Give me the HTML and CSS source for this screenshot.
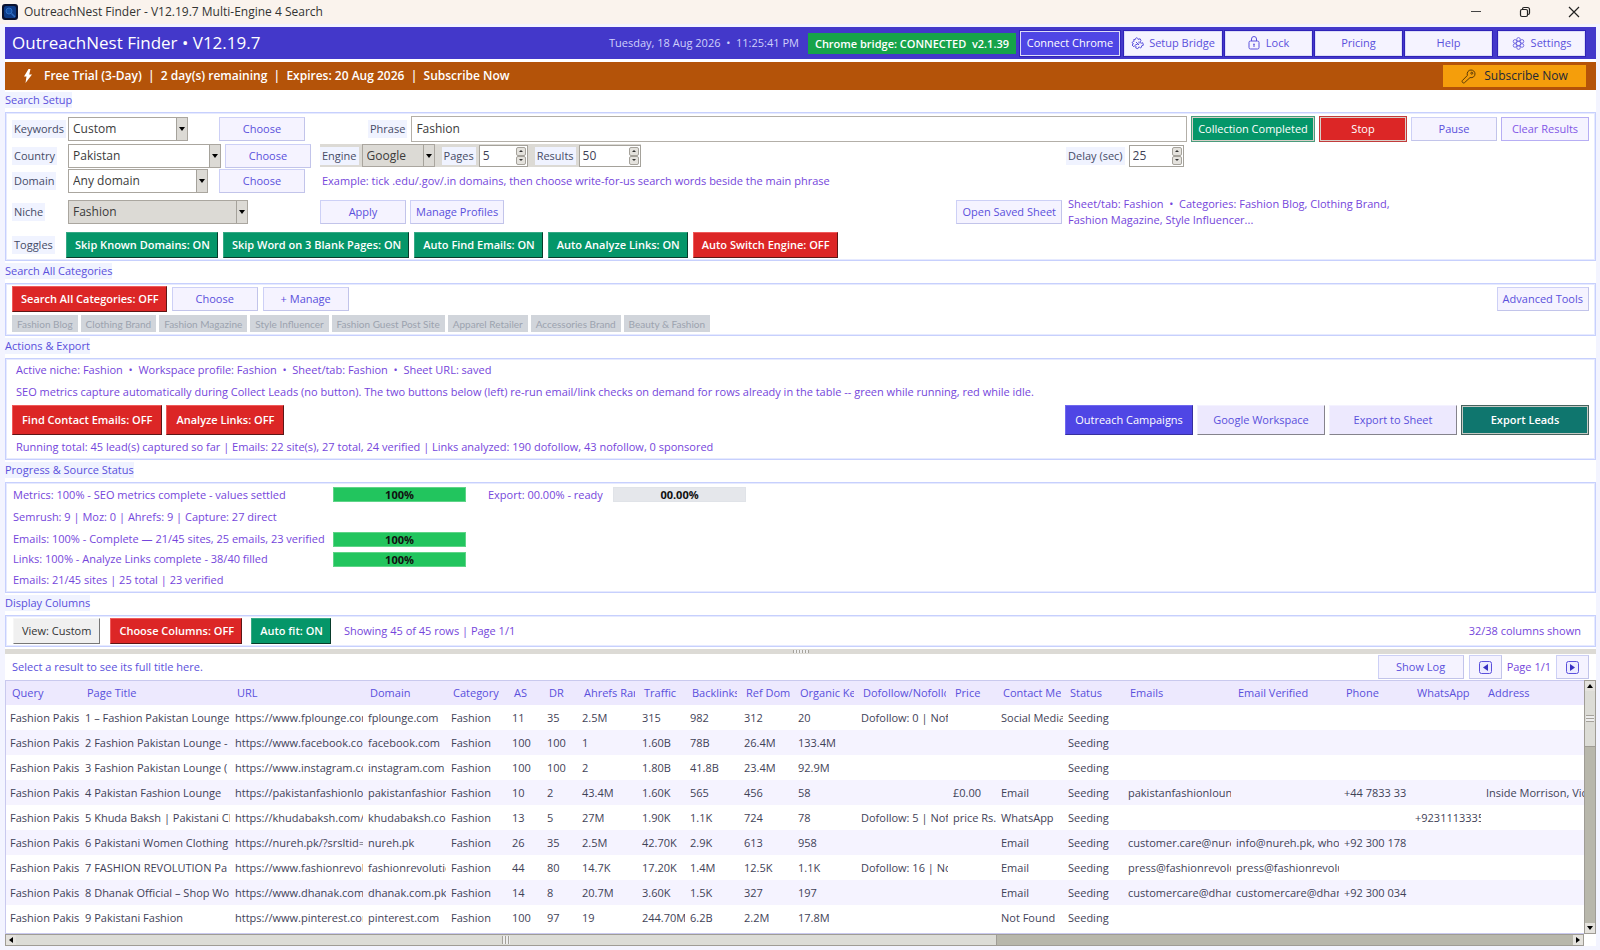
FILE: index.html
```html
<!DOCTYPE html>
<html lang="en">
<head>
<meta charset="utf-8">
<title>OutreachNest Finder - V12.19.7 Multi-Engine 4 Search</title>
<link rel="stylesheet" href="styles.css">
</head>
<body>
<div class="titlebar">
  <svg class="app-icon" viewBox="0 0 16 16" aria-hidden="true"><rect width="16" height="16" rx="3" fill="#0a1230"/><rect x="2" y="2" width="12" height="12" rx="2" fill="#0d3a86"/><circle cx="7" cy="7" r="3" fill="#1450a8" stroke="#2f6cc0"/><path d="M9.500 9.500 13 13" stroke="#2f6cc0" stroke-width="1.500"/></svg>
  <span class="window-title">OutreachNest Finder - V12.19.7 Multi-Engine 4 Search</span>
  <button class="win-btn" aria-label="Minimize"><svg width="12" height="12" viewBox="0 0 12 12"><path d="M1 5.500h10" stroke="#444"/></svg></button>
  <button class="win-btn" aria-label="Restore"><svg width="12" height="12" viewBox="0 0 12 12" fill="none" stroke="#222" stroke-width="1.200"><rect x="1.500" y="3.500" width="7" height="7" rx="1.500"/><path d="M3.500 3.500V3a1.500 1.500 0 0 1 1.500-1.500h3.500a2 2 0 0 1 2 2V7A1.500 1.500 0 0 1 9 8.500h-.5"/></svg></button>
  <button class="win-btn" aria-label="Close"><svg width="12" height="12" viewBox="0 0 12 12"><path d="m1 1 10 10M11 1 1 11" stroke="#222" stroke-width="1.200"/></svg></button>
</div>

<div class="app">
  <header class="header">
    <h1>OutreachNest Finder • V12.19.7</h1>
    <span class="clock">Tuesday, 18 Aug 2026 &nbsp;•&nbsp; 11:25:41 PM</span>
    <span class="bridge">Chrome bridge: CONNECTED &nbsp;v2.1.39</span>
    <button class="hbtn hbtn-primary">Connect Chrome</button>
    <button class="hbtn hbtn-wide"><svg width="13" height="13" viewBox="0 0 13 13" fill="none" stroke="currentColor"><path d="M4.500 2.300c-.3-1.600 1.900-2.200 2.400-.6l.2.700 2-.6 1 2-.6.500c-1 1 .2 2.400 1.300 1.800l.9-.4.700 2.500-2 .8c.8 1.500-.9 2.500-1.900 1.300l-.4-.5-1.300 1.900-2.100-.8.300-1.200c.2-1.100-1.300-1.500-1.800-.5l-.3.600L1 8l1.500-1.300C1 6.700.6 4.900 2.300 4.500l.8-.2-.4-1.700zM5 5l3 3M8 4.500v2M4.500 7.500h2"/></svg>Setup Bridge</button>
    <button class="hbtn"><svg width="12" height="14" viewBox="0 0 12 14" fill="none" stroke="currentColor"><rect x="1" y="5" width="10" height="8" rx="1.500"/><path d="M3.500 5V3a2.500 2.500 0 0 1 5 0v2M6 8v3M5.200 8.200h1.600"/></svg>Lock</button>
    <button class="hbtn">Pricing</button>
    <button class="hbtn">Help</button>
    <button class="hbtn hbtn-last"><svg width="13" height="13" viewBox="0 0 13 13" fill="none" stroke="currentColor" stroke-width=".8"><circle cx="6.500" cy="2.400" r="1.800"/><circle cx="10" cy="4.400" r="1.800"/><circle cx="10" cy="8.500" r="1.800"/><circle cx="6.500" cy="10.600" r="1.800"/><circle cx="3" cy="8.500" r="1.800"/><circle cx="3" cy="4.400" r="1.800"/><circle cx="6.500" cy="6.500" r="2.200"/></svg>Settings</button>
  </header>

  <div class="trial">
    <svg width="10" height="14" viewBox="0 0 10 14" aria-hidden="true"><path d="M5.500 0 1 7.500h2.500L2.500 14 9 5.500H6.200L7.500 0z" fill="#fff"/></svg>
    <span class="trial-text">Free Trial (3-Day) &nbsp;|&nbsp; 2 day(s) remaining &nbsp;|&nbsp; Expires: 20 Aug 2026 &nbsp;|&nbsp; Subscribe Now</span>
    <button class="subscribe"><svg width="15" height="15" viewBox="0 0 15 15" fill="none" stroke="#5b3a08"><path d="M6.300 6.500C5.600 3.200 7.500 1 10 1c2.200 0 4 1.600 4 3.900 0 2.500-2.200 4.300-5 3.700L3.500 13.700c-1 1-3.200-.6-2.200-2.100z"/><circle cx="10.800" cy="4.200" r="1"/></svg>Subscribe Now</button>
  </div>

  <section>
    <h2><span>Search Setup</span></h2>
    <div class="panel setup">
      <label class="lbl" for="kw">Keywords</label>
      <div class="cell">
        <span class="combo combo-kw"><select id="kw"><option>Custom</option></select></span>
        <button class="btn push">Choose</button>
      </div>
      <div class="cell phrase">
        <label class="lbl" for="phrase">Phrase</label>
        <input class="field" id="phrase" type="text" value="Fashion">
        <button class="btn framed green w-collect">Collection Completed</button>
        <button class="btn framed red w-88">Stop</button>
        <button class="btn">Pause</button>
        <button class="btn violet w-88">Clear Results</button>
      </div>

      <label class="lbl" for="country">Country</label>
      <div class="cell">
        <span class="combo combo-country"><select id="country"><option>Pakistan</option></select></span>
        <button class="btn">Choose</button>
      </div>
      <div class="cell">
        <div class="engine">
          <label class="lbl" for="engine">Engine</label>
          <span class="combo combo-engine gray"><select id="engine"><option>Google</option></select></span>
          <label class="lbl gap-l" for="pages">Pages</label>
          <span class="spin spin-pages"><input id="pages" type="text" value="5"><span class="spin-btns"><button aria-label="More pages"></button><button aria-label="Fewer pages"></button></span></span>
          <label class="lbl" for="results">Results</label>
          <span class="spin spin-results"><input id="results" type="text" value="50"><span class="spin-btns"><button aria-label="More results"></button><button aria-label="Fewer results"></button></span></span>
        </div>
      </div>
      <div class="cell">
        <label class="lbl" for="delay">Delay (sec)</label>
        <span class="spin spin-delay"><input id="delay" type="text" value="25"><span class="spin-btns"><button aria-label="Longer delay"></button><button aria-label="Shorter delay"></button></span></span>
      </div>

      <label class="lbl" for="domain">Domain</label>
      <div class="cell">
        <span class="combo combo-domain"><select id="domain"><option>Any domain</option></select></span>
        <button class="btn push">Choose</button>
      </div>
      <div class="cell span-rest note hint">Example: tick .edu/.gov/.in domains, then choose write-for-us search words beside the main phrase</div>

      <label class="lbl" for="niche">Niche</label>
      <div class="cell"><span class="combo combo-niche gray"><select id="niche"><option>Fashion</option></select></span></div>
      <div class="cell">
        <button class="btn">Apply</button>
        <button class="btn">Manage Profiles</button>
        <button class="btn saved">Open Saved Sheet</button>
      </div>
      <div class="cell note"><p class="sheet">Sheet/tab: Fashion &nbsp;•&nbsp; Categories: Fashion Blog, Clothing Brand, Fashion Magazine, Style Influencer...</p></div>

      <span class="lbl">Toggles</span>
      <div class="cell toggles">
        <button class="tog green">Skip Known Domains: ON</button>
        <button class="tog green">Skip Word on 3 Blank Pages: ON</button>
        <button class="tog green">Auto Find Emails: ON</button>
        <button class="tog green">Auto Analyze Links: ON</button>
        <button class="tog red">Auto Switch Engine: OFF</button>
      </div>
    </div>
  </section>

  <section>
    <h2><span>Search All Categories</span></h2>
    <div class="panel cats">
      <div class="cats-row">
        <button class="tog red">Search All Categories: OFF</button>
        <button class="btn">Choose</button>
        <button class="btn">+ Manage</button>
        <button class="btn end">Advanced Tools</button>
      </div>
      <div class="tags">
        <button disabled>Fashion Blog</button><button disabled>Clothing Brand</button><button disabled>Fashion Magazine</button><button disabled>Style Influencer</button><button disabled>Fashion Guest Post Site</button><button disabled>Apparel Retailer</button><button disabled>Accessories Brand</button><button disabled>Beauty &amp; Fashion</button>
      </div>
    </div>
  </section>

  <section>
    <h2><span>Actions &amp; Export</span></h2>
    <div class="panel actions">
      <p class="note">Active niche: Fashion &nbsp;•&nbsp; Workspace profile: Fashion &nbsp;•&nbsp; Sheet/tab: Fashion &nbsp;•&nbsp; Sheet URL: saved</p>
      <p class="note">SEO metrics capture automatically during Collect Leads (no button). The two buttons below (left) re-run email/link checks on demand for rows already in the table -- green while running, red while idle.</p>
      <div class="actions-row">
        <button class="tog red">Find Contact Emails: OFF</button>
        <button class="tog red">Analyze Links: OFF</button>
        <button class="act indigo end">Outreach Campaigns</button>
        <button class="act">Google Workspace</button>
        <button class="act">Export to Sheet</button>
        <button class="act teal">Export Leads</button>
      </div>
      <p class="note">Running total: 45 lead(s) captured so far | Emails: 22 site(s), 27 total, 24 verified | Links analyzed: 190 dofollow, 43 nofollow, 0 sponsored</p>
    </div>
  </section>

  <section>
    <h2><span>Progress &amp; Source Status</span></h2>
    <div class="panel progress note">
      <span class="task">Metrics: 100% - SEO metrics complete - values settled</span><span class="bar">100%</span><span class="export">Export: 00.00% - ready</span><span class="bar idle">00.00%</span>
      <span class="row-all">Semrush: 9 | Moz: 0 | Ahrefs: 9 | Capture: 27 direct</span>
      <span class="task">Emails: 100% - Complete — 21/45 sites, 25 emails, 23 verified</span><span class="bar">100%</span>
      <span class="task">Links: 100% - Analyze Links complete - 38/40 filled</span><span class="bar">100%</span>
      <span class="row-all">Emails: 21/45 sites | 25 total | 23 verified</span>
    </div>
  </section>

  <section>
    <h2><span>Display Columns</span></h2>
    <div class="panel columns">
      <button class="tog plain">View: Custom</button>
      <button class="tog red">Choose Columns: OFF</button>
      <button class="tog green">Auto fit: ON</button>
      <span class="note">Showing 45 of 45 rows | Page 1/1</span>
      <span class="note end">32/38 columns shown</span>
    </div>
  </section>

  <div class="sash"><i></i></div>

  <div class="result-bar">
    <span class="result-title">Select a result to see its full title here.</span>
    <button class="btn">Show Log</button>
    <button class="btn nav" aria-label="Previous page"><svg width="13" height="13" viewBox="0 0 13 13"><rect x=".5" y=".5" width="12" height="12" rx="2" fill="#ecebff" stroke="#5b50dc"/><path d="M9 3v7L4 6.500z" fill="#3730c3"/></svg></button>
    <span class="note">Page 1/1</span>
    <button class="btn nav" aria-label="Next page"><svg width="13" height="13" viewBox="0 0 13 13"><rect x=".5" y=".5" width="12" height="12" rx="2" fill="#ecebff" stroke="#5b50dc"/><path d="M4 3v7l5-3.500z" fill="#3730c3"/></svg></button>
  </div>

  <div class="grid-wrap">
    <div class="grid-view">
      <table>
        <colgroup><col class="c75"><col class="c150"><col class="c133"><col class="c83"><col class="c61"><col class="c35"><col class="c35"><col class="c60"><col class="c48"><col class="c54"><col class="c54"><col class="c63"><col class="c92"><col class="c48"><col class="c67"><col class="c60"><col class="c108"><col class="c108"><col class="c71"><col class="c71"><col></colgroup>
        <thead><tr><th>Query</th><th>Page Title</th><th>URL</th><th>Domain</th><th>Category</th><th>AS</th><th>DR</th><th>Ahrefs Rank</th><th>Traffic</th><th>Backlinks</th><th>Ref Dom</th><th>Organic Key</th><th>Dofollow/Nofollow</th><th>Price</th><th>Contact Met</th><th>Status</th><th>Emails</th><th>Email Verified</th><th>Phone</th><th>WhatsApp</th><th>Address</th></tr></thead>
        <tbody>
          <tr><td>Fashion Pakis</td><td>1 – Fashion Pakistan Lounge</td><td>https://www.fplounge.com</td><td>fplounge.com</td><td>Fashion</td><td>11</td><td>35</td><td>2.5M</td><td>315</td><td>982</td><td>312</td><td>20</td><td>Dofollow: 0 | Nof</td><td></td><td>Social Media</td><td>Seeding</td><td></td><td></td><td></td><td></td><td></td></tr>
          <tr><td>Fashion Pakis</td><td>2 Fashion Pakistan Lounge -</td><td>https://www.facebook.com</td><td>facebook.com</td><td>Fashion</td><td>100</td><td>100</td><td>1</td><td>1.60B</td><td>78B</td><td>26.4M</td><td>133.4M</td><td></td><td></td><td></td><td>Seeding</td><td></td><td></td><td></td><td></td><td></td></tr>
          <tr><td>Fashion Pakis</td><td>3 Fashion Pakistan Lounge (</td><td>https://www.instagram.com</td><td>instagram.com</td><td>Fashion</td><td>100</td><td>100</td><td>2</td><td>1.80B</td><td>41.8B</td><td>23.4M</td><td>92.9M</td><td></td><td></td><td></td><td>Seeding</td><td></td><td></td><td></td><td></td><td></td></tr>
          <tr><td>Fashion Pakis</td><td>4 Pakistan Fashion Lounge</td><td>https://pakistanfashionlo</td><td>pakistanfashion</td><td>Fashion</td><td>10</td><td>2</td><td>43.4M</td><td>1.60K</td><td>565</td><td>456</td><td>58</td><td></td><td>£0.00</td><td>Email</td><td>Seeding</td><td>pakistanfashionloun</td><td></td><td>+44 7833 33</td><td></td><td>Inside Morrison, Vict</td></tr>
          <tr><td>Fashion Pakis</td><td>5 Khuda Baksh | Pakistani Cl</td><td>https://khudabaksh.com/</td><td>khudabaksh.co</td><td>Fashion</td><td>13</td><td>5</td><td>27M</td><td>1.90K</td><td>1.1K</td><td>724</td><td>78</td><td>Dofollow: 5 | Nof</td><td>price Rs.</td><td>WhatsApp</td><td>Seeding</td><td></td><td></td><td></td><td>+9231113335</td><td></td></tr>
          <tr><td>Fashion Pakis</td><td>6 Pakistani Women Clothing</td><td>https://nureh.pk/?srsltid=</td><td>nureh.pk</td><td>Fashion</td><td>26</td><td>35</td><td>2.5M</td><td>42.70K</td><td>2.9K</td><td>613</td><td>958</td><td></td><td></td><td>Email</td><td>Seeding</td><td>customer.care@nure</td><td>info@nureh.pk, who</td><td>+92 300 178</td><td></td><td></td></tr>
          <tr><td>Fashion Pakis</td><td>7 FASHION REVOLUTION Pa</td><td>https://www.fashionrevol</td><td>fashionrevolutio</td><td>Fashion</td><td>44</td><td>80</td><td>14.7K</td><td>17.20K</td><td>1.4M</td><td>12.5K</td><td>1.1K</td><td>Dofollow: 16 | No</td><td></td><td>Email</td><td>Seeding</td><td>press@fashionrevolu</td><td>press@fashionrevolu</td><td></td><td></td><td></td></tr>
          <tr><td>Fashion Pakis</td><td>8 Dhanak Official – Shop Wo</td><td>https://www.dhanak.com</td><td>dhanak.com.pk</td><td>Fashion</td><td>14</td><td>8</td><td>20.7M</td><td>3.60K</td><td>1.5K</td><td>327</td><td>197</td><td></td><td></td><td>Email</td><td>Seeding</td><td>customercare@dhan</td><td>customercare@dhan</td><td>+92 300 034</td><td></td><td></td></tr>
          <tr><td>Fashion Pakis</td><td>9 Pakistani Fashion</td><td>https://www.pinterest.com</td><td>pinterest.com</td><td>Fashion</td><td>100</td><td>97</td><td>19</td><td>244.70M</td><td>6.2B</td><td>2.2M</td><td>17.8M</td><td></td><td></td><td>Not Found</td><td>Seeding</td><td></td><td></td><td></td><td></td><td></td></tr>
        </tbody>
      </table>
    </div>
    <div class="scroll vert">
      <button class="arrow up" aria-label="Scroll up"></button>
      <div class="track"><div class="thumb"><i></i></div></div>
      <button class="arrow down" aria-label="Scroll down"></button>
    </div>
    <div class="scroll horz">
      <button class="arrow left" aria-label="Scroll left"></button>
      <div class="track"><div class="thumb"><i></i></div></div>
      <button class="arrow right" aria-label="Scroll right"></button>
    </div>
  </div>
</div>
</body>
</html>
```
FILE: styles.css
```css
* { box-sizing: border-box; }

:root {
  --indigo: #5a50dc;
  --violet: #7546db;
  --line: #c7d0fd;
  --soft: #f5f3ff;
  --lbl: #f0f3ff;
}

body {
  margin: 0;
  min-height: 100vh;
  background: #f3f4ff;
  font-family: "Open Sans", "Noto Sans", sans-serif;
  font-size: 11px;
  line-height: 16px;
  color: #3f4257;
}

h1, h2, p { margin: 0; font-weight: 400; }

button, input, select {
  margin: 0;
  padding: 0;
  border-radius: 0;
  font: inherit;
  color: inherit;
}

button { white-space: nowrap; }

/* Window title bar */
.titlebar {
  display: flex;
  align-items: center;
  height: 24px;
  padding: 0 2px;
  background: #faf3ed;
}
.app-icon { width: 16px; height: 16px; }
.window-title { flex: 1; margin-left: 6px; font-size: 12px; color: #333; }
.win-btn {
  display: grid;
  place-items: center;
  width: 49px;
  height: 24px;
  border: 0;
  background: none;
}

.app {
  margin: 3px 4px 4px 5px;
  background: #fff;
}

/* Header */
.header {
  display: flex;
  align-items: center;
  gap: 3px;
  height: 32px;
  padding: 0 11px 0 7px;
  background: #4338ca;
  color: #fff;
}
.header h1 { flex: 1; font-size: 17px; line-height: 24px; }
.clock { margin-right: 6px; color: #cfd0fb; }
.bridge {
  padding: 3px 7px 2px;
  margin-right: 1px;
  background: #16a34a;
  font-weight: 600;
}
.hbtn {
  display: flex;
  align-items: center;
  justify-content: center;
  gap: 6px;
  width: 87px;
  height: 25px;
  border: 1px solid #dcdcf8;
  background: var(--soft);
  box-shadow: 0 0 0 1px #2f22b8;
  color: var(--indigo);
}
.hbtn-primary { width: 100px; margin-right: 1px; background: #4f46e5; color: #fff; }
.hbtn-wide { width: 98px; gap: 5px; }
.hbtn-last { margin-left: 3px; }

/* Trial banner */
.trial {
  display: flex;
  align-items: center;
  height: 28px;
  margin-top: 3px;
  padding: 0 10px 0 18px;
  background: #b45309;
  color: #fff;
  font-size: 12px;
  font-weight: 600;
}
.trial-text { flex: 1; margin-left: 11px; }
.subscribe {
  display: flex;
  align-items: center;
  justify-content: center;
  gap: 8px;
  width: 143px;
  height: 22px;
  border: 0;
  background: #f59e0b;
  color: #1f2937;
  font-weight: 400;
}

/* Sections */
h2 {
  height: 22px;
  padding-top: 2px;
  font-size: 11px;
  color: var(--indigo);
}
h2 span { display: inline-block; background: var(--lbl); }
.panel {
  border: 1px solid var(--line);
  box-shadow: inset 0 0 0 1px #e6eaff;
  background: #fff;
}
.note { color: var(--violet); }
.end { margin-left: auto; }

/* Buttons */
.btn {
  flex: none;
  min-width: 86px;
  height: 24px;
  padding: 0 5px;
  border: 1px solid #cdd0f6;
  border-right-color: #c2c4ea;
  border-bottom-color: #c2c4ea;
  background: var(--soft);
  color: var(--indigo);
}
.btn.violet { border-color: #b7aef4; color: #8257e6; }
.btn.green, .btn.red { color: #fff; }
.framed { height: 26px; box-shadow: inset 0 0 0 1px #d8cfc8; }
.green { background: #059669; }
.red { background: #dc2626; }
.btn.framed.green { border-color: #4b9c7d; }
.btn.framed.red { border-color: #c23c3c; }
.w-collect { width: 124px; }
.w-88 { width: 88px; }
.tog {
  flex: none;
  height: 26px;
  padding: 0 7px 0 8px;
  border: 1px solid;
  color: #fff;
  font-weight: 600;
}
.tog.green { border-color: #35a985 #083b2b #083b2b #35a985; }
.tog.red { border-color: #ef5a5a #5c1717 #5c1717 #ef5a5a; }
.tog.plain {
  border-color: #f6f6f6 #777 #777 #f6f6f6;
  background: #f0f0f0;
  color: #333;
  font-weight: 400;
}

/* Labels and fields */
.lbl {
  flex: none;
  justify-self: start;
  padding: 1px 2px;
  background: var(--lbl);
  color: #464b66;
}
.combo { position: relative; display: inline-flex; flex: none; height: 24px; font-size: 12px; }
.combo select {
  appearance: none;
  width: 100%;
  padding: 0 14px 0 4px;
  border: 1px solid #aaa69f;
  background: #fff;
  color: #3b3b3b;
}
.combo::before {
  content: "";
  position: absolute;
  inset: 1px 1px 1px auto;
  width: 10px;
  border-left: 1px solid #a5a29b;
  background: #dcdad5;
  pointer-events: none;
}
.combo::after {
  content: "";
  position: absolute;
  right: 3px;
  top: 10px;
  border: 3px solid transparent;
  border-top: 4px solid #000;
  border-bottom: 0;
  pointer-events: none;
}
.combo.gray select { background: #dcdad5; }
.combo-kw { width: 120px; }
.combo-country { width: 153px; }
.combo-domain { width: 140px; }
.combo-niche { width: 180px; }
.combo-engine { width: 73px; height: 23px; }
.field {
  flex: 1;
  min-width: 60px;
  height: 26px;
  padding: 0 4px;
  border: 1px solid #b3afa8;
  background: #fff;
  font-size: 12px;
  color: #3b3b3b;
}
.spin {
  display: inline-flex;
  flex: none;
  height: 22px;
  padding: 1px;
  border: 1px solid #a5a29b;
  background: #fff;
}
.spin input { flex: 1; min-width: 0; padding: 0 2px; border: 0; background: none; font-size: 12px; }
.spin-btns { display: flex; flex-direction: column; width: 10px; }
.spin-btns button {
  display: grid;
  place-items: center;
  flex: 1;
  border: 1px solid #a5a29b;
  border-radius: 2px;
  background: #e4e2dd;
}
.spin-btns button::after {
  content: "";
  border: 2px solid transparent;
  border-top: 0;
  border-bottom: 2px solid #333;
}
.spin-btns button:last-child::after { transform: rotate(180deg); }
.spin-pages { width: 49px; margin-right: 4px; }
.spin-results { width: 62px; }
.spin-delay { width: 55px; }

/* Search setup */
.setup {
  display: grid;
  grid-template-columns: 56px 252px minmax(0, 1fr) 523px;
  grid-template-rows: 29px 25px 26px 36px 29px;
  align-items: center;
  padding: 1px 6px;
}
.cell { display: flex; align-items: center; gap: 4px; min-width: 0; }
.push { margin-left: 27px; }
.combo-domain + .push { margin-left: 7px; }
.phrase { grid-column: 3 / -1; padding-left: 48px; }
.span-rest { grid-column: 3 / -1; }
.hint { padding-left: 2px; }
.engine { display: flex; align-items: center; gap: 3px; background: #dcdad5; }
.gap-l { margin-left: 4px; }
.saved { margin-left: auto; margin-right: 4px; }
.sheet { max-width: 330px; padding-left: 2px; }
.toggles { grid-column: 2 / -1; gap: 5px; margin-left: -2px; }

/* Categories */
.cats { padding: 2px 6px; }
.cats-row { display: flex; align-items: center; gap: 5px; }
.tags { display: flex; gap: 3px; padding: 3px 0 1px; }
.tags button {
  height: 17px;
  padding: 0 5px;
  border: 0;
  background: #d1d5db;
  color: #9ca3af;
  font-family: Lato, "Open Sans", sans-serif;
  font-size: 10px;
}

/* Actions */
.actions { padding: 0 6px 1px; }
.actions p { padding: 3px 4px; }
.actions-row { display: flex; gap: 4px; margin: 2px 0 1px; }
.actions-row .tog { height: 30px; padding: 0 9px; }
.act {
  width: 128px;
  height: 30px;
  border: 1px solid;
  border-color: #f4f2ff #85838c #85838c #f4f2ff;
  background: #ede9fe;
  color: var(--indigo);
}
.act.indigo { border-color: #6f68ee #37309f #37309f #6f68ee; background: #4f46e5; color: #fff; }
.act.teal { border-color: #46625e; box-shadow: inset 0 0 0 1px #c5c9c4; background: #0f766e; color: #fff; font-weight: 600; }

/* Progress */
.progress {
  display: grid;
  grid-template-columns: 320px 133px 147px 133px;
  grid-template-rows: 23px 22px 22px 18px 24px;
  align-items: center;
  padding: 0 7px;
}
.task { grid-column: 1; }
.export { padding-left: 22px; }
.row-all { grid-column: 1 / -1; }
.bar {
  height: 15px;
  border: 1px solid #5fd488;
  background: #22c55e;
  color: #111;
  font-weight: 700;
  line-height: 14px;
  text-align: center;
}
.bar.idle { border-color: #e0e3e8; background: #e5e7eb; }

/* Display columns */
.columns { display: flex; align-items: center; padding: 2px 14px 2px 7px; }
.columns .plain { padding: 0 8px; margin-right: 10px; }
.columns .tog.red { margin-right: 9px; }
.columns .tog.green { margin-right: 13px; }

.sash {
  display: grid;
  place-items: center;
  height: 5px;
  margin-top: 2px;
  background: #dcdad5;
}
.sash i { width: 16px; height: 3px; background: repeating-linear-gradient(90deg, #a5a29b 0 1px, #eee 1px 3px); }

.result-bar { display: flex; align-items: center; gap: 5px; height: 26px; padding: 0 7px; }
.result-title { flex: 1; color: var(--indigo); }
.nav { display: grid; place-items: center; min-width: 33px; }

/* Results grid */
.grid-wrap { display: grid; grid-template-columns: minmax(0, 1fr) 12px; }
.grid-view {
  overflow: hidden;
  min-height: 254px;
  border: 1px solid #c9c9ee;
  border-right: 0;
}
table { width: 100%; table-layout: fixed; border-collapse: separate; border-spacing: 0; }
th, td {
  height: 25px;
  padding: 0 0 0 4px;
  border-right: 1px solid transparent;
  overflow: hidden;
  text-align: left;
  white-space: nowrap;
  font-weight: 400;
}
th { height: 24px; padding-left: 6px; border-right-width: 3px; background: #ede9fe; color: var(--indigo); }
th:last-child, td:last-child { border-right: 0; }
tbody tr:nth-child(even) { background: var(--soft); }
.c35 { width: 35px; }
.c48 { width: 48px; }
.c54 { width: 54px; }
.c60 { width: 60px; }
.c61 { width: 61px; }
.c63 { width: 63px; }
.c67 { width: 67px; }
.c71 { width: 71px; }
.c75 { width: 75px; }
.c83 { width: 83px; }
.c92 { width: 92px; }
.c108 { width: 108px; }
.c133 { width: 133px; }
.c150 { width: 150px; }

/* Scrollbars */
.scroll { display: flex; border: 1px solid #9f9c95; background: #b8b7ab; }
.vert { flex-direction: column; }
.horz { height: 12px; }
.track { display: flex; flex: 1; }
.vert .track { flex-direction: column; }
.thumb { display: grid; place-items: center; background: #dcdcd6; }
.horz .thumb { width: 63%; border-right: 1px solid #9f9c95; }
.vert .thumb { height: 24%; border-bottom: 1px solid #9f9c95; }
.horz .thumb i { width: 8px; height: 8px; background: repeating-linear-gradient(90deg, #a5a29b 0 1px, #eee 1px 3px); }
.vert .thumb i { width: 8px; height: 7px; background: repeating-linear-gradient(#a5a29b 0 1px, #eee 1px 3px); }
.arrow { display: grid; place-items: center; flex: none; width: 10px; height: 10px; border: 0; background: #e4e2dd; }
.arrow::after { content: ""; border: 3px solid transparent; border-top: 0; border-bottom: 4px solid #000; }
.down::after { transform: rotate(180deg); }
.left::after { transform: rotate(-90deg); }
.right::after { transform: rotate(90deg); }
.left { box-shadow: 1px 0 #9f9c95; }
.up { box-shadow: 0 1px #9f9c95; }
```
